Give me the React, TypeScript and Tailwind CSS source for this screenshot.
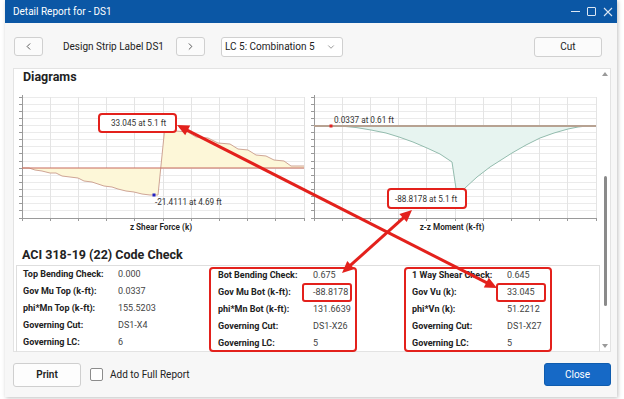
import { ChevronDown, ChevronLeft, ChevronRight } from "lucide-react";

const RED = "#e3211c";

type Pt = [number, number];

const shearPts: Pt[] = [
    [22, 168], [29, 168], [35, 170], [42, 171], [50, 173], [56, 173], [62, 176], [70, 177],
    [78, 178], [84, 181], [92, 182], [98, 184], [104, 186], [112, 187], [118, 189], [126, 191],
    [134, 192], [142, 194], [150, 195], [158, 195], [165, 126], [170, 127], [176, 131], [188, 132],
    [196, 137], [208, 138], [218, 143], [230, 144], [238, 149], [248, 150], [256, 155], [266, 156],
    [274, 160], [284, 161], [291, 166], [304, 166],
]

const momentPts: Pt[] = [
    [314, 126], [340, 126], [356, 127.5], [371, 130], [386, 133], [399, 137], [413, 142], [427, 148],
    [440, 154], [452, 162], [457, 195], [461, 192], [465, 188], [477, 177], [490, 167], [501, 160],
    [512, 153], [526, 145], [540, 138], [554, 133], [568, 129], [578, 127], [587, 126], [596, 126],
]

const pts = (p: Pt[]) => p.map((e) => e.join(",")).join(" ")

function ChartGrid({ x0, x1 }: { x0: number, x1: number }) {
    const y0 = 97
    const y1 = 218
    const cols = Array.from({ length: 11 }, (_, k) => x0 + (k * (x1 - x0)) / 10)
    const rows = Array.from({ length: 18 }, (_, j) => y0 + (j * (y1 - y0)) / 17)

    return (
        <g shapeRendering="crispEdges">
            {rows.map((y) => <line key={'h' + y} x1={x0} x2={x1} y1={y} y2={y} stroke="#ebebeb" />)}
            {cols.map((x) => <line key={'v' + x} x1={x} x2={x} y1={y0} y2={y1} stroke="#e4e4e4" />)}
            {rows.map((y) => <line key={'t' + y} x1={x0 - 3} x2={x0} y1={y} y2={y} stroke="#9a9a9a" />)}
            {cols.map((x) => <line key={'b' + x} x1={x} x2={x} y1={y1} y2={y1 + 3} stroke="#9a9a9a" />)}
            <line x1={x0} x2={x0} y1={y0 - 2} y2={y1} stroke="#9a9a9a" />
            <line x1={x0} x2={x1} y1={y1} y2={y1} stroke="#9a9a9a" />
        </g>
    )
}

function ShearChart() {
    return (
        <svg width={295} height={142} viewBox="14 92 295 142" className="block shrink-0">
            <ChartGrid x0={22} x1={304} />
            <polygon points={pts([...shearPts, [304, 168]])} fill="#fdf7d8" />
            <polyline points={pts(shearPts)} fill="none" stroke="#cfa595" strokeWidth={1} />
            <line x1={22} x2={304} y1={168} y2={168} stroke="#c76a5c" strokeWidth={1.2} />
            <rect x={163.5} y={124.5} width={3} height={3} fill="#e02424" />
            <rect x={152.5} y={193.5} width={3} height={3} fill="#2222c4" />
            <rect x={99} y={114} width={77} height={18} rx={3} fill="#fff" stroke={RED} strokeWidth={2} />
            <text x={111} y={126} fontSize={8.2} fill="#333">33.045 at 5.1 ft</text>
            <text x={155} y={205} fontSize={8.2} fill="#333">-21.4111 at 4.69 ft</text>
            <text x={161} y={230} fontSize={8.2} fontWeight={600} fill="#222" textAnchor="middle">z Shear Force (k)</text>
        </svg>
    )
}

function MomentChart() {
    return (
        <svg width={291} height={142} viewBox="309 92 291 142" className="block shrink-0">
            <ChartGrid x0={314} x1={596} />
            <polygon points={pts(momentPts)} fill="#e7f4f0" />
            <polyline points={pts(momentPts.slice(1, -1))} fill="none" stroke="#93bcae" strokeWidth={1} />
            <line x1={314} x2={596} y1={126} y2={126} stroke="#b7a292" strokeWidth={2} />
            <rect x={329.5} y={124.5} width={3} height={3} fill="#e02424" />
            <rect x={455.5} y={193.5} width={3} height={3} fill="#2222c4" />
            <text x={334} y={123} fontSize={8.2} fill="#333">0.0337 at 0.61 ft</text>
            <rect x={388} y={189} width={78} height={19} rx={3} fill="#fff" stroke={RED} strokeWidth={2} />
            <text x={395} y={202} fontSize={8.2} fill="#333">-88.8178 at 5.1 ft</text>
            <text x={452} y={230} fontSize={8.2} fontWeight={600} fill="#222" textAnchor="middle">z-z Moment (k-ft)</text>
        </svg>
    )
}

interface CheckRow {
    label: string,
    value: string,
    boxed?: boolean
}

function CheckColumn({ rows, boxed, className }: { rows: Array<CheckRow>, boxed?: boolean, className: string }) {
    return (
        <div className={`${className} ${boxed ? 'outline-2 -outline-offset-2 outline-[#e3211c] rounded-[4px]' : ''}`}>
            {rows.map((row) => (
                <div key={row.label} className="flex h-[17px] items-center">
                    <span className="w-[95px] shrink-0 font-bold text-[9px] text-[#222]">{row.label}</span>
                    {row.boxed ? (
                        <span className="-ml-[11px] inline-block h-[19px] w-[50px] pl-[11px] leading-[19px] text-[9px] text-[#444] rounded-[3px] outline-2 -outline-offset-2 outline-[#e3211c]">{row.value}</span>
                    ) : (
                        <span className="text-[9px] text-[#444]">{row.value}</span>
                    )}
                </div>
            ))}
        </div>
    )
}

function arrowHead(tip: Pt, from: Pt) {
    const dx = tip[0] - from[0]
    const dy = tip[1] - from[1]
    const len = Math.hypot(dx, dy)
    const ux = dx / len
    const uy = dy / len
    const bx = tip[0] - ux * 12
    const by = tip[1] - uy * 12
    return pts([tip, [bx - uy * 5.5, by + ux * 5.5], [bx + uy * 5.5, by - ux * 5.5]])
}

function Arrow({ a, b }: { a: Pt, b: Pt }) {
    const dx = b[0] - a[0]
    const dy = b[1] - a[1]
    const len = Math.hypot(dx, dy)
    const s: Pt = [a[0] + (dx / len) * 9, a[1] + (dy / len) * 9]
    const e: Pt = [b[0] - (dx / len) * 9, b[1] - (dy / len) * 9]
    return (
        <g>
            <line x1={s[0]} y1={s[1]} x2={e[0]} y2={e[1]} stroke={RED} strokeWidth={3} />
            <polygon points={arrowHead(a, b)} fill={RED} />
            <polygon points={arrowHead(b, a)} fill={RED} />
        </g>
    )
}

export default function App() {
    return (
        <div className="relative h-[399px] w-[624px] overflow-hidden bg-white font-['Roboto','Noto_Sans',sans-serif] text-[#222]">
            <div className="ml-[5px] flex h-[397px] w-[612px] flex-col bg-[#f7f7f7] shadow-[1px_1px_4px_rgba(0,0,0,0.25)]">

                {/* Title bar */}
                <div className="flex h-[23px] shrink-0 items-center bg-[#0b57a5] pl-[8px] pr-[4px] text-white">
                    <span className="text-[10px]">Detail Report for - DS1</span>
                    <div className="ml-auto flex items-center gap-[7px] text-[#dbe6f3]">
                        <span className="block h-px w-[9px] bg-[#dbe6f3]" />
                        <span className="block h-[9px] w-[9px] rounded-[1px] border border-[#dbe6f3]" />
                        <svg width="10" height="10" viewBox="0 0 10 10"><path d="M1 1L9 9M9 1L1 9" stroke="#dbe6f3" strokeWidth="1.1" /></svg>
                    </div>
                </div>

                {/* Toolbar */}
                <div className="flex h-[45px] shrink-0 items-center pl-[9px] pr-[15px] pt-[2px]">
                    <button className="flex h-[19px] w-[29px] items-center justify-center rounded-[3px] border border-[#d0d0d0] bg-[#fbfbfb]">
                        <ChevronLeft size={11} strokeWidth={1.6} />
                    </button>
                    <span className="ml-[20px] w-[113px] text-[10px]">Design Strip Label DS1</span>
                    <button className="flex h-[19px] w-[29px] items-center justify-center rounded-[3px] border border-[#d0d0d0] bg-[#fbfbfb]">
                        <ChevronRight size={11} strokeWidth={1.6} />
                    </button>
                    <div className="ml-[16px] flex h-[20px] w-[122px] items-center rounded-[3px] border border-[#d0d0d0] bg-white pl-[3px] pr-[6px] text-[10px]">
                        LC 5: Combination 5
                        <ChevronDown size={10} strokeWidth={1.4} className="ml-auto text-[#555]" />
                    </div>
                    <button className="ml-auto flex h-[20px] w-[68px] items-center justify-center rounded-[3px] border border-[#d0d0d0] bg-[#fbfbfb] text-[10px]">Cut</button>
                </div>

                {/* Report panel */}
                <div className="ml-[8px] flex h-[284px] w-[598px] shrink-0 border border-[#e3e3e3] bg-white">
                    <div className="w-[586px] shrink-0">
                        <div className="h-[15px] pl-[9px] text-[12.5px] font-bold leading-[15px]">Diagrams</div>
                        <div className="mt-[8px] flex">
                            <ShearChart />
                            <MomentChart />
                        </div>
                        <div className="mt-[13px] h-[16px] pl-[8px] text-[12.5px] font-bold leading-[16px]">ACI 318-19 (22) Code Check</div>
                        <div className="ml-[2px] mt-[2px] flex h-[87px] w-[584px] border-x border-t border-[#dedede]">
                            <CheckColumn className="w-[192px] pl-[6px]" rows={[
                                { label: 'Top Bending Check:', value: '0.000' },
                                { label: 'Gov Mu Top (k-ft):', value: '0.0337' },
                                { label: 'phi*Mn Top (k-ft):', value: '155.5203' },
                                { label: 'Governing Cut:', value: 'DS1-X4' },
                                { label: 'Governing LC:', value: '6' },
                            ]} />
                            <CheckColumn boxed className="mt-px h-[85px] w-[148px] pl-[9px]" rows={[
                                { label: 'Bot Bending Check:', value: '0.675' },
                                { label: 'Gov Mu Bot (k-ft):', value: '-88.8178', boxed: true },
                                { label: 'phi*Mn Bot (k-ft):', value: '131.6639' },
                                { label: 'Governing Cut:', value: 'DS1-X26' },
                                { label: 'Governing LC:', value: '5' },
                            ]} />
                            <CheckColumn boxed className="ml-[47px] mt-px h-[85px] w-[148px] pl-[8px]" rows={[
                                { label: '1 Way Shear Check:', value: '0.645' },
                                { label: 'Gov Vu (k):', value: '33.045', boxed: true },
                                { label: 'phi*Vn (k):', value: '51.2212' },
                                { label: 'Governing Cut:', value: 'DS1-X27' },
                                { label: 'Governing LC:', value: '5' },
                            ]} />
                        </div>
                    </div>

                    {/* Scrollbar */}
                    <div className="flex w-[10px] flex-col items-center pt-[3px]">
                        <svg width="6" height="4" viewBox="0 0 6 4"><path d="M0 4L3 0L6 4Z" fill="#9a9a9a" /></svg>
                        <div className="mt-[100px] h-[130px] w-[3px] rounded-full bg-[#8a8a8a]" />
                        <svg className="mt-auto mb-[3px]" width="6" height="4" viewBox="0 0 6 4"><path d="M0 0L3 4L6 0Z" fill="#9a9a9a" /></svg>
                    </div>
                </div>

                {/* Footer */}
                <div className="flex flex-1 items-center pl-[8px] pr-[6px]">
                    <button className="h-[24px] w-[68px] rounded-[3px] border border-[#cfcfcf] bg-[#fdfdfd] text-[10px] font-semibold">Print</button>
                    <span className="ml-[9px] h-[13px] w-[13px] rounded-[2px] border border-[#8c8c8c] bg-white" />
                    <span className="ml-[7px] text-[10px]">Add to Full Report</span>
                    <button className="ml-auto h-[23px] w-[67px] rounded-[3px] border border-[#0f5cae] bg-[#1669c6] text-[10px] text-white">Close</button>
                </div>
            </div>

            {/* Annotation arrows */}
            <svg className="pointer-events-none absolute inset-0" width={624} height={399}>
                <Arrow a={[177, 125]} b={[497, 288]} />
                <Arrow a={[342, 273]} b={[412, 210]} />
            </svg>
        </div>
    )
}
